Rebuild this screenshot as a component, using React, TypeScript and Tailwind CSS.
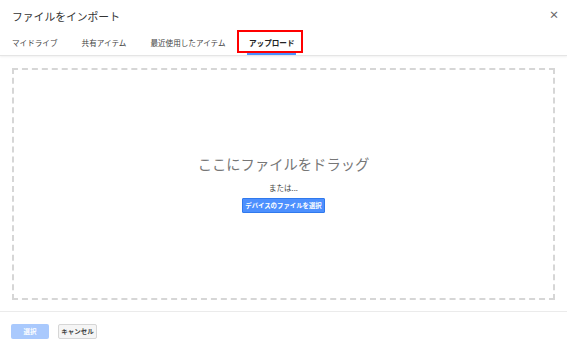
import React from "react";

export default function App() {
  const font = { fontFamily: '"Noto Sans CJK JP", "Noto Sans", Arial, sans-serif' };
  return (
    <div className="w-[567px] h-[351px] bg-white flex flex-col overflow-hidden" style={font}>
      {/* header */}
      <div className="relative h-[56px] shrink-0 border-b border-[#e5e5e5] shadow-[0_1px_2px_rgba(0,0,0,0.06)]">
        <div className="absolute left-[12px] top-[8px] text-[10.8px] leading-[16px] text-[#333] whitespace-nowrap">ファイルをインポート</div>
        <div className="absolute right-[8px] top-[9px] text-[10px] leading-[12px] text-[#666] font-bold">×</div>
        <div className="absolute left-[12px] top-[36px] flex items-start gap-[24px] text-[7.6px] leading-[14px] text-[#444] whitespace-nowrap">
          <div>マイドライブ</div>
          <div>共有アイテム</div>
          <div>最近使用したアイテム</div>
        </div>
        <div className="absolute left-[237px] top-[30px] w-[66px] h-[23px] border-[2.5px] border-[#ff0000]" />
        <div className="absolute left-[249px] top-[36px] text-[7.6px] leading-[14px] text-[#222] font-bold whitespace-nowrap">アップロード</div>
        <div className="absolute left-[247px] top-[53px] w-[49px] h-[2px] bg-[#4d90fe]" />
      </div>
      {/* body */}
      <div className="flex-1 px-[12px] pt-[12px] pb-[11px] border-b border-[#ebebeb]">
        <div className="h-full border-2 border-dashed border-[#d6d6d6] flex flex-col items-center">
          <div className="mt-[84px] text-[14.3px] leading-[20px] text-[#777] whitespace-nowrap">ここにファイルをドラッグ</div>
          <div className="mt-[9px] text-[7.5px] leading-[10px] text-[#444] whitespace-nowrap">または...</div>
          <div className="mt-[5px] h-[15px] px-[2px] bg-[#4d90fe] border border-[#3079ed] rounded-[1px] text-white text-[6.4px] font-bold leading-[13px] whitespace-nowrap">
            デバイスのファイルを選択
          </div>
        </div>
      </div>
      {/* footer */}
      <div className="h-[39px] shrink-0 flex items-start pt-[12px] pl-[11px] gap-[9px]">
        <div className="w-[38px] h-[15px] bg-[#a9c9fd] rounded-[2px] text-white text-[6.5px] font-bold leading-[15px] text-center">選択</div>
        <div className="w-[39px] h-[15px] bg-[#f5f5f5] border border-[#d6d6d6] rounded-[2px] text-[#444] text-[6.5px] font-bold leading-[13px] text-center whitespace-nowrap">キャンセル</div>
      </div>
    </div>
  );
}
